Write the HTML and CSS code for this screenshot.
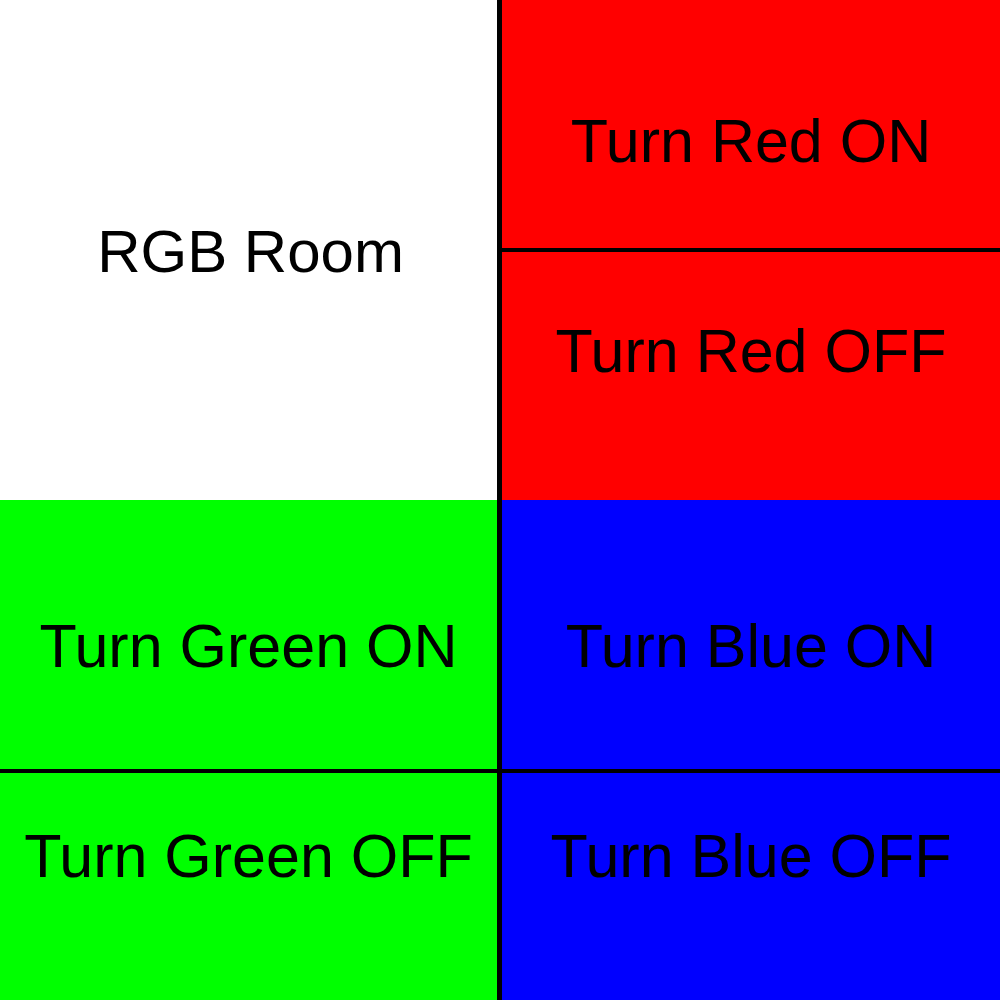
FILE: index.html
```html
<!DOCTYPE html>
<html lang="en">
<head>
<meta charset="utf-8">
<title>RGB Room</title>
<link rel="stylesheet" href="styles.css">
</head>
<body>
<div class="app">
  <div class="col">
    <div class="title">RGB Room</div>
    <div class="group group-bottom green">
      <div class="btn btn-on">Turn Green ON</div>
      <div class="btn btn-off">Turn Green OFF</div>
    </div>
  </div>
  <div class="col">
    <div class="group group-top red">
      <div class="btn btn-on">Turn Red ON</div>
      <div class="btn btn-off">Turn Red OFF</div>
    </div>
    <div class="group group-bottom blue">
      <div class="btn btn-on">Turn Blue ON</div>
      <div class="btn btn-off">Turn Blue OFF</div>
    </div>
  </div>
</div>
</body>
</html>
```

FILE: styles.css
```css
html, body {
  margin: 0;
  padding: 0;
  width: 1000px;
  height: 1000px;
  overflow: hidden;
  background: #000;
}

.app {
  display: grid;
  grid-template-columns: 497px 498px;
  column-gap: 5px;
  width: 1000px;
  height: 1000px;
  background: #000;
  font-family: "Liberation Sans", Arial, sans-serif;
  font-size: 61px;
  line-height: 60px;
  color: #000;
}

.col {
  display: flex;
  flex-direction: column;
}

.title {
  height: 500px;
  box-sizing: border-box;
  padding-top: 222px;
  padding-left: 4px;
  background: #fff;
  font-size: 60px;
  text-align: center;
}

.group {
  display: flex;
  flex-direction: column;
  row-gap: 4px;
  height: 500px;
}

.btn {
  box-sizing: border-box;
  text-align: center;
  white-space: nowrap;
}

.red .btn { background: #ff0000; }
.green .btn { background: #00ff00; }
.blue .btn { background: #0000ff; }

.group-top .btn-on { height: 248px; padding-top: 111px; }
.group-top .btn-off { height: 248px; padding-top: 69px; }

.group-bottom .btn-on { height: 269px; padding-top: 116px; }
.group-bottom .btn-off { height: 227px; padding-top: 53px; }
```
